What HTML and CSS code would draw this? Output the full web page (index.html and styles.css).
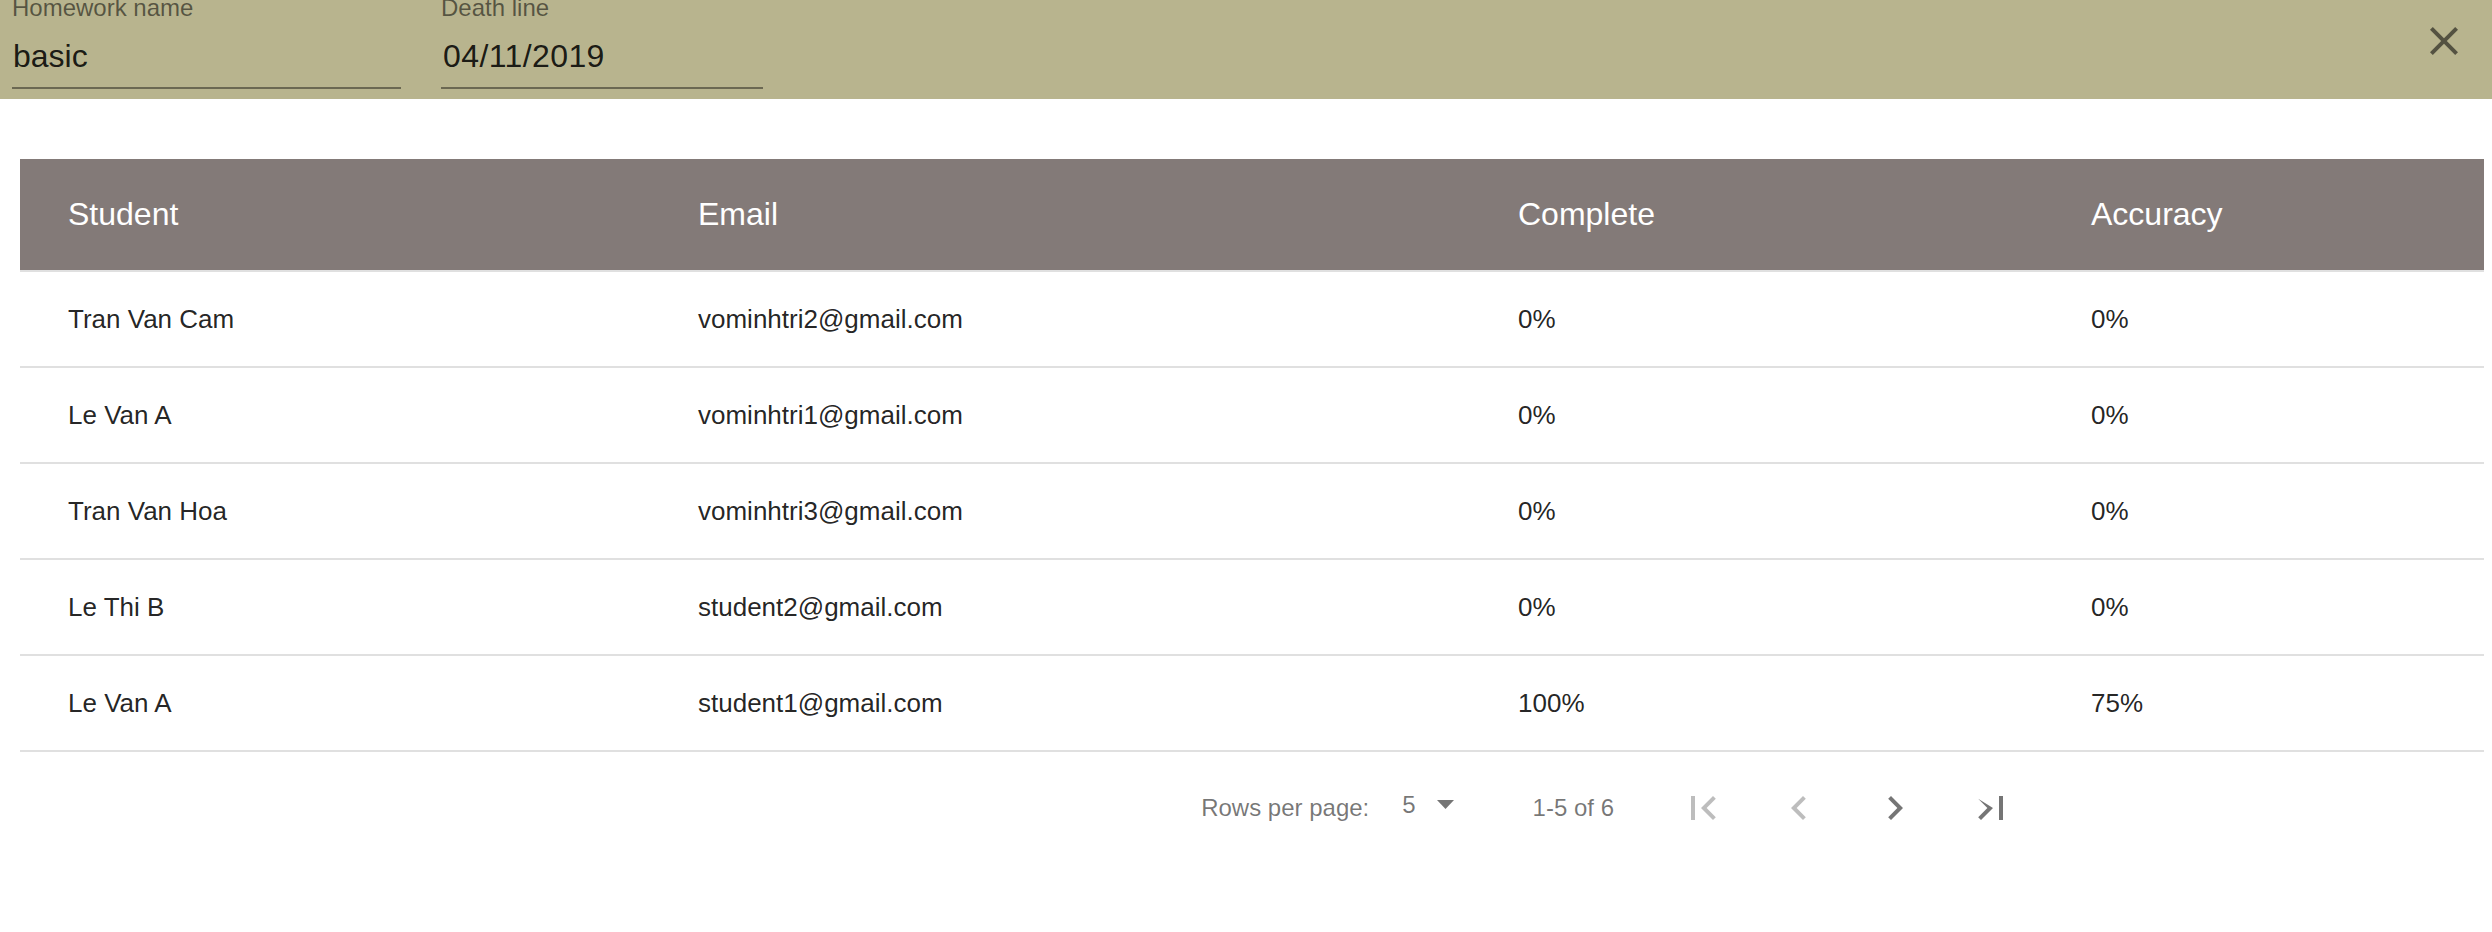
FILE: index.html
```html
<!DOCTYPE html>
<html lang="en">
<head>
<meta charset="utf-8">
<title>Homework</title>
<link rel="stylesheet" href="styles.css">
</head>
<body>
<div class="dialog">
  <header class="band">
    <div class="field field-name">
      <label class="field-label">Homework name</label>
      <div class="field-input">basic</div>
    </div>
    <div class="field field-date">
      <label class="field-label">Death line</label>
      <div class="field-input date">04/11/2019</div>
    </div>
    <button class="close" aria-label="close">
      <svg viewBox="0 0 24 24" width="48" height="48"><path d="M19 6.41L17.59 5 12 10.59 6.41 5 5 6.41 10.59 12 5 17.59 6.41 19 12 13.41 17.59 19 19 17.59 13.41 12z"/></svg>
    </button>
  </header>

  <main class="content">
    <div class="table">
      <div class="row head">
        <div class="cell">Student</div>
        <div class="cell">Email</div>
        <div class="cell">Complete</div>
        <div class="cell">Accuracy</div>
      </div>
      <div class="row">
        <div class="cell">Tran Van Cam</div>
        <div class="cell">vominhtri2@gmail.com</div>
        <div class="cell">0%</div>
        <div class="cell">0%</div>
      </div>
      <div class="row">
        <div class="cell">Le Van A</div>
        <div class="cell">vominhtri1@gmail.com</div>
        <div class="cell">0%</div>
        <div class="cell">0%</div>
      </div>
      <div class="row">
        <div class="cell">Tran Van Hoa</div>
        <div class="cell">vominhtri3@gmail.com</div>
        <div class="cell">0%</div>
        <div class="cell">0%</div>
      </div>
      <div class="row">
        <div class="cell">Le Thi B</div>
        <div class="cell">student2@gmail.com</div>
        <div class="cell">0%</div>
        <div class="cell">0%</div>
      </div>
      <div class="row">
        <div class="cell">Le Van A</div>
        <div class="cell">student1@gmail.com</div>
        <div class="cell">100%</div>
        <div class="cell">75%</div>
      </div>
    </div>

    <div class="pagination">
      <span class="caption">Rows per page:</span>
      <div class="select">
        <span class="select-value">5</span>
        <svg class="select-arrow" viewBox="0 0 17 9" width="17" height="9"><polygon points="0,0 17,0 8.5,9"/></svg>
      </div>
      <span class="caption range">1-5 of 6</span>
      <div class="actions">
        <button class="icon-btn disabled" aria-label="first page">
          <svg viewBox="0 0 24 24" width="48" height="48"><path d="M18.41 16.59L13.82 12l4.59-4.59L17 6l-6 6 6 6zM6 6h2v12H6z"/></svg>
        </button>
        <button class="icon-btn disabled" aria-label="previous page">
          <svg viewBox="0 0 24 24" width="48" height="48"><path d="M15.41 7.41L14 6l-6 6 6 6 1.41-1.41L10.83 12z"/></svg>
        </button>
        <button class="icon-btn" aria-label="next page">
          <svg viewBox="0 0 24 24" width="48" height="48"><path d="M10 6L8.59 7.41 13.17 12l-4.58 4.59L10 18l6-6z"/></svg>
        </button>
        <button class="icon-btn" aria-label="last page">
          <svg viewBox="0 0 24 24" width="48" height="48"><path d="M5.59 7.41L10.18 12l-4.59 4.59L7 18l6-6zM16 6h2v12h-2z"/></svg>
        </button>
      </div>
    </div>
  </main>
</div>
</body>
</html>
```

FILE: styles.css
```css
* {
  box-sizing: border-box;
}

html, body {
  margin: 0;
  padding: 0;
  background: #ffffff;
}

body {
  font-family: "Liberation Sans", Arial, sans-serif;
  width: 2492px;
  height: 932px;
  overflow: hidden;
}

.dialog {
  display: flex;
  flex-direction: column;
}

/* ---------- top band ---------- */
.band {
  display: flex;
  align-items: flex-start;
  height: 99px;
  padding-left: 12px;
  background: #b8b48e;
  gap: 40px;
}

.field {
  display: flex;
  flex-direction: column;
}

.field-name {
  width: 389px;
}

.field-date {
  width: 322px;
}

.field-label {
  display: block;
  height: 16px;
  font-size: 24px;
  line-height: 16px;
  color: rgba(0, 0, 0, 0.54);
}

.field-input {
  margin-top: 20px;
  height: 53px;
  line-height: 40px;
  padding-bottom: 11px;
  font-size: 32px;
  color: rgba(0, 0, 0, 0.87);
  border-bottom: 2px solid rgba(0, 0, 0, 0.42);
  padding-left: 1px;
  box-sizing: content-box;
  height: 40px;
}

.field-input.date {
  letter-spacing: 0.4px;
  padding-left: 2px;
}

.close {
  margin-left: auto;
  margin-top: 17px;
  margin-right: 24px;
  width: 48px;
  height: 48px;
  padding: 0;
  border: 0;
  background: transparent;
  display: flex;
  fill: rgba(0, 0, 0, 0.54);
}

/* ---------- content ---------- */
.content {
  padding: 60px 8px 0 20px;
}

.table {
  display: flex;
  flex-direction: column;
}

.row {
  display: grid;
  grid-template-columns: 630px 820px 573px 1fr;
  align-items: center;
  height: 96px;
  border-bottom: 2px solid #e0e0e0;
  font-size: 26px;
  color: rgba(0, 0, 0, 0.87);
}

.row.head {
  height: 113px;
  background: #837a78;
  color: #ffffff;
  font-size: 32px;
  padding-top: 0;
}

.cell {
  padding-left: 48px;
  white-space: nowrap;
}

/* ---------- pagination ---------- */
.pagination {
  display: flex;
  align-items: center;
  justify-content: flex-end;
  height: 112px;
  padding-right: 445px;
  font-size: 24px;
  color: rgba(0, 0, 0, 0.54);
}

.select {
  display: flex;
  align-items: center;
  margin-left: 33px;
  margin-right: 79px;
}

.select-value {
  margin-right: 21px;
  position: relative;
  top: -3px;
}

.select-arrow {
  fill: #757575;
  position: relative;
  top: -4px;
}

.actions {
  display: flex;
  margin-left: 41px;
}

.icon-btn {
  width: 96px;
  height: 96px;
  padding: 24px;
  border: 0;
  background: transparent;
  display: flex;
  fill: rgba(0, 0, 0, 0.54);
}

.icon-btn.disabled {
  fill: rgba(0, 0, 0, 0.26);
}
```
